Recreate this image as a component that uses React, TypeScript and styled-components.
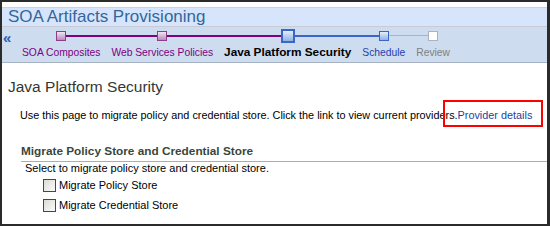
import React from 'react'
import styled, { createGlobalStyle } from 'styled-components'

const GlobalStyle = createGlobalStyle`
  html, body {
    margin: 0;
    padding: 0;
    background: #2b2b2b;
  }
  * {
    box-sizing: border-box;
  }
`

type StopState = 'visited' | 'current' | 'next' | 'disabled'

interface Stop {
  label: string
  state: StopState
  left?: string
  right?: string
}

const PURPLE = '#800080'
const BLUE = '#3a67c6'
const GREY = '#a9b3c4'

const stops: Stop[] = [
  { label: 'SOA Composites', state: 'visited', right: PURPLE },
  { label: 'Web Services Policies', state: 'visited', left: PURPLE, right: PURPLE },
  { label: 'Java Platform Security', state: 'current', left: PURPLE, right: BLUE },
  { label: 'Schedule', state: 'next', left: BLUE, right: GREY },
  { label: 'Review', state: 'disabled', left: GREY },
]

const App: React.FC = () => {
  return (
    <Frame>
      <GlobalStyle />
      <TitleBar>
        <Title>SOA Artifacts Provisioning</Title>
      </TitleBar>
      <Train>
        <BackArrow>«</BackArrow>
        {stops.map((s) => (
          <StopColumn key={s.label}>
            <Track>
              <Segment $color={s.left} />
              <Marker $state={s.state} />
              <Segment $color={s.right} />
            </Track>
            <StopLabel $state={s.state}>{s.label}</StopLabel>
          </StopColumn>
        ))}
      </Train>
      <Body>
        <PageHeading>Java Platform Security</PageHeading>
        <Intro>
          Use this page to migrate policy and credential store. Click the link to view current providers.
          <LinkWrap>
            <ProviderLink href="#">Provider details</ProviderLink>
            <Highlight />
          </LinkWrap>
        </Intro>
        <Section>
          <SectionHeading>Migrate Policy Store and Credential Store</SectionHeading>
          <SectionBody>
            <Hint>Select to migrate policy store and credential store.</Hint>
            <CheckRow>
              <CheckBox />
              <CheckLabel>Migrate Policy Store</CheckLabel>
            </CheckRow>
            <CheckRow>
              <CheckBox />
              <CheckLabel>Migrate Credential Store</CheckLabel>
            </CheckRow>
          </SectionBody>
        </Section>
      </Body>
    </Frame>
  )
}

const Frame = styled.div`
  width: 550px;
  height: 226px;
  border: 2px solid #2b2b2b;
  border-right-width: 3px;
  background: #ffffff;
  font-family: 'Liberation Sans', Arial, sans-serif;
  overflow: hidden;
  display: flex;
  flex-direction: column;
`

const TitleBar = styled.div`
  margin-top: 5px;
  border-top: 1px solid #c4d4ec;
  background: #d6e5fb;
  height: 19px;
  padding-left: 6px;
  display: flex;
  align-items: flex-end;
`

const Title = styled.h1`
  margin: 0;
  font-size: 17px;
  font-weight: normal;
  color: #33669c;
  line-height: 19px;
  white-space: nowrap;
`

const Train = styled.div`
  display: flex;
  align-items: flex-start;
  background: #cddcee;
  border-top: 1px solid #c8ccd6;
  border-bottom: 1px solid #a8b4c4;
  height: 37px;
  padding-left: 1px;
`

const BackArrow = styled.span`
  width: 13.5px;
  margin-top: 3px;
  font-size: 15px;
  line-height: 15px;
  color: #2c5cb0;
  font-weight: bold;
`

const StopColumn = styled.div`
  display: flex;
  flex-direction: column;
  align-items: stretch;
  padding-top: 2px;
`

const Track = styled.div`
  display: flex;
  align-items: center;
  height: 13px;
`

const Segment = styled.div<{ $color?: string }>`
  flex: 1;
  height: ${(p) => (p.$color === GREY ? '1px' : '2px')};
  background: ${(p) => p.$color ?? 'transparent'};
`

const markerStyles: Record<StopState, string> = {
  visited: `
    width: 10px; height: 10px;
    border: 1px solid #8a3f8a;
    background: linear-gradient(#f2e4f2, #b98ab9);
  `,
  current: `
    width: 14px; height: 14px;
    border: 2px solid #3a67c6;
    background: linear-gradient(#e4eefb, #8fb2e2);
  `,
  next: `
    width: 10px; height: 10px;
    border: 1px solid #3a67c6;
    background: linear-gradient(#e4eefb, #8fb2e2);
  `,
  disabled: `
    width: 10px; height: 10px;
    border: 1px solid #a9b3c4;
    background: #ffffff;
  `,
}

const Marker = styled.div<{ $state: StopState }>`
  flex: none;
  ${(p) => markerStyles[p.$state]}
`

const labelColors: Record<StopState, string> = {
  visited: '#800080',
  current: '#000000',
  next: '#1c3fb0',
  disabled: '#808080',
}

const StopLabel = styled.span<{ $state: StopState }>`
  padding: 4px 5.5px 0;
  font-size: ${(p) => (p.$state === 'current' ? '11.8px' : '10.3px')};
  line-height: 13px;
  white-space: nowrap;
  color: ${(p) => labelColors[p.$state]};
  font-weight: ${(p) => (p.$state === 'current' ? 'bold' : 'normal')};
`

const Body = styled.div`
  padding: 15px 0 0 6px;
`

const PageHeading = styled.h2`
  margin: 0;
  font-size: 15.5px;
  font-weight: normal;
  color: #333833;
  line-height: 18px;
`

const Intro = styled.p`
  margin: 12px 0 0 12px;
  font-size: 10.85px;
  line-height: 14px;
  color: #000000;
  white-space: nowrap;
`

const LinkWrap = styled.span`
  position: relative;
`

const ProviderLink = styled.a`
  color: #1c3fa0;
  text-decoration: none;
`

const Highlight = styled.span`
  position: absolute;
  left: -15px;
  right: -11px;
  top: -9px;
  bottom: -6px;
  border: 2px solid #ff0000;
`

const Section = styled.section`
  margin: 22px 0 0 13px;
`

const SectionHeading = styled.h3`
  margin: 0;
  padding-bottom: 2px;
  font-size: 11.8px;
  font-weight: bold;
  color: #3a473a;
  line-height: 15px;
  border-bottom: 1px solid #aeaabb;
`

const SectionBody = styled.div`
  padding: 0 0 0 4px;
`

const Hint = styled.div`
  font-size: 11px;
  line-height: 13px;
  color: #000000;
`

const CheckRow = styled.label`
  display: flex;
  align-items: center;
  margin: 0 0 0 18px;
  height: 20px;
  font-size: 11px;
`

const CheckBox = styled.span`
  width: 13px;
  height: 13px;
  border: 1px solid #1c5180;
  background: linear-gradient(135deg, #dcdcd6, #fafaf8);
`

const CheckLabel = styled.span`
  margin-left: 3px;
  color: #000000;
`

export default App
